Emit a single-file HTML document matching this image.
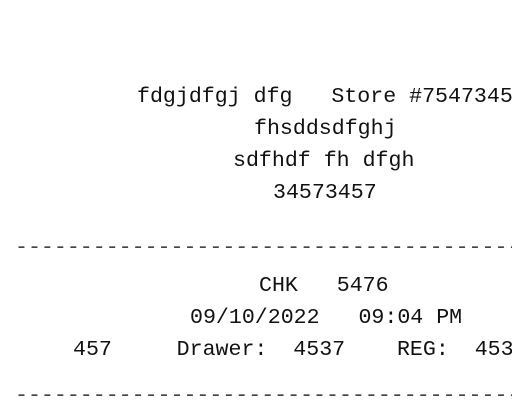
<!DOCTYPE html>
<html><head><style>
html,body{margin:0;padding:0;background:#fff;width:512px;height:400px;overflow:hidden;position:relative}
.l{position:absolute;white-space:pre;font-family:"Liberation Mono","Courier New",monospace;font-size:21.6px;line-height:32px;color:#111}
.d{color:#444}
</style></head><body>
<div class="l" style="left:137px;top:81px">fdgjdfgj dfg   Store #7547345</div>
<div class="l" style="left:254px;top:113px">fhsddsdfghj</div>
<div class="l" style="left:233px;top:145px">sdfhdf fh dfgh</div>
<div class="l" style="left:273px;top:177px">34573457</div>
<div class="l d" style="left:15px;top:232px">----------------------------------------</div>
<div class="l" style="left:259px;top:270px">CHK   5476</div>
<div class="l" style="left:190px;top:302px">09/10/2022   09:04 PM</div>
<div class="l" style="left:73px;top:334px">457     Drawer:  4537    REG:  4537</div>
<div class="l d" style="left:15px;top:380px">----------------------------------------</div>
</body></html>
